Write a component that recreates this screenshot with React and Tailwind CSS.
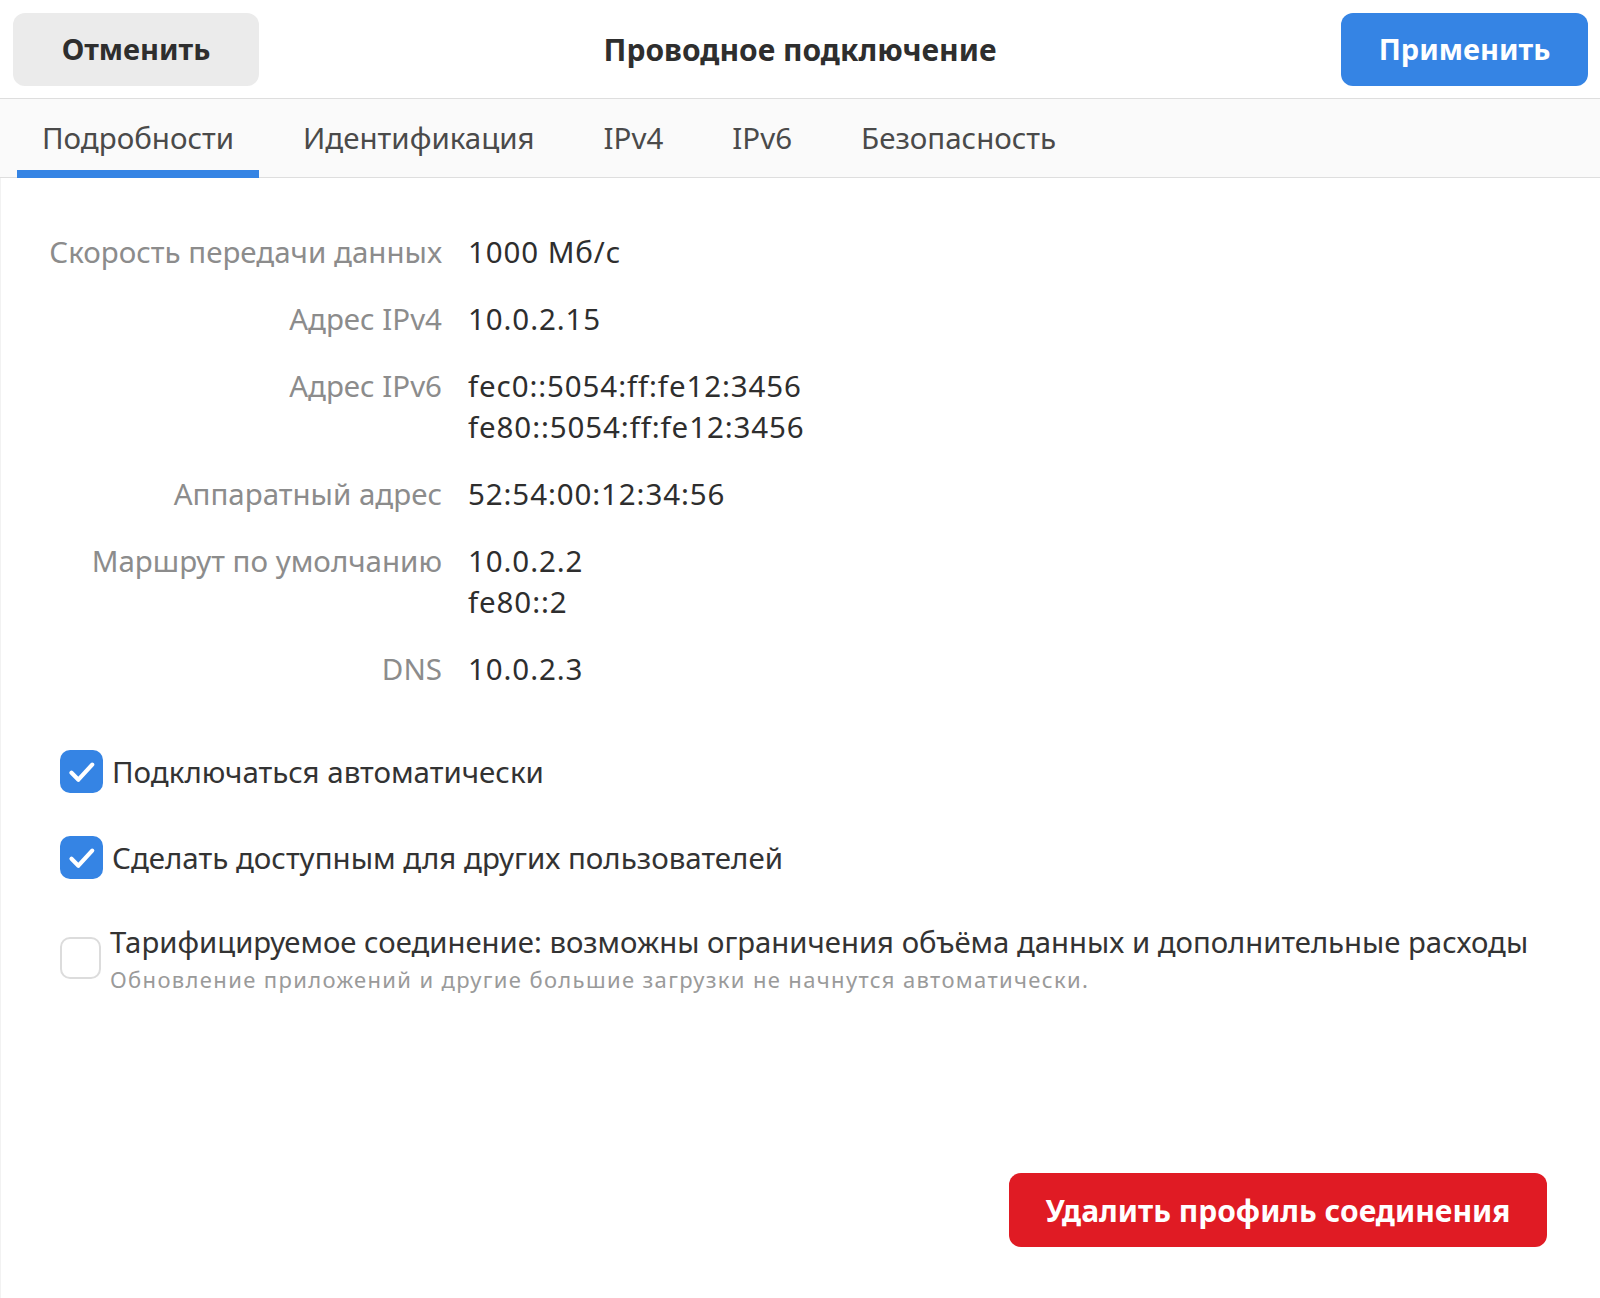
import React from 'react';

const rows = [
  { label: 'Скорость передачи данных', values: ['1000 Мб/с'] },
  { label: 'Адрес IPv4', values: ['10.0.2.15'] },
  { label: 'Адрес IPv6', values: ['fec0::5054:ff:fe12:3456', 'fe80::5054:ff:fe12:3456'] },
  { label: 'Аппаратный адрес', values: ['52:54:00:12:34:56'] },
  { label: 'Маршрут по умолчанию', values: ['10.0.2.2', 'fe80::2'] },
  { label: 'DNS', values: ['10.0.2.3'] },
];

const tabs = ['Подробности', 'Идентификация', 'IPv4', 'IPv6', 'Безопасность'];

const CheckBox = ({ checked }) =>
  checked ? (
    <div className="w-[43px] h-[43px] rounded-[10px] bg-[#3584e4] flex items-center justify-center shrink-0">
      <svg viewBox="0 0 24 24" className="w-[36px] h-[36px]" fill="none" stroke="white" strokeWidth="2.8" strokeLinecap="round" strokeLinejoin="round">
        <path d="M5 12.5l4.6 4.6 9.2-10" />
      </svg>
    </div>
  ) : (
    <div className="w-[41px] h-[42px] rounded-[10px] border-2 border-[#dcdcdc] bg-white shrink-0" />
  );

export default function App() {
  return (
    <div className="w-full h-[1298px] bg-white flex flex-col font-['Noto_Sans',sans-serif] text-[#2e2e2e]">
      {/* header bar */}
      <div className="h-[99px] flex items-center justify-between pl-[13px] pr-[12px] border-b border-[#dedede] bg-white shrink-0">
        <button className="w-[246px] h-[73px] rounded-[12px] bg-[#ebebeb] text-[29px] font-bold text-[#2e2e2e]">
          Отменить
        </button>
        <div className="text-[30px] font-bold text-[#2e2e2e]">Проводное подключение</div>
        <button className="w-[247px] h-[73px] rounded-[12px] bg-[#3584e4] text-[29px] font-bold text-white">
          Применить
        </button>
      </div>

      {/* tabs */}
      <div className="h-[79px] bg-[#fafafa] border-b border-[#dedede] flex items-stretch pl-[17px] gap-[19px] shrink-0">
        {tabs.map((t, i) => (
          <div key={t} className="relative px-[25px] flex items-center text-[29.5px] text-[#4a4a4a]">
            {t}
            {i === 0 && <div className="absolute left-0 right-0 bottom-[-1px] h-[8px] bg-[#3584e4]" />}
          </div>
        ))}
      </div>

      {/* details */}
      <div className="flex-1 flex flex-col border-l border-[#f2f2f2]">
        <div className="grid grid-cols-[441px_1fr] gap-x-[26px] gap-y-[26px] pt-[53px] text-[29.5px] leading-[41px]">
          {rows.map((r) => (
            <React.Fragment key={r.label}>
              <div className="text-right text-[#8c8c8c] whitespace-nowrap">{r.label}</div>
              <div className="flex flex-col text-[#2e2e2e] tracking-[0.9px]">
                {r.values.map((v) => (
                  <span key={v}>{v}</span>
                ))}
              </div>
            </React.Fragment>
          ))}
        </div>

        <div className="flex flex-col gap-[43px] pl-[59px] mt-[61px]">
          <div className="flex items-center gap-[9px] text-[29.5px] leading-[41px] text-[#333]">
            <CheckBox checked />
            <span>Подключаться автоматически</span>
          </div>
          <div className="flex items-center gap-[9px] text-[29.5px] leading-[41px] text-[#333]">
            <CheckBox checked />
            <span>Сделать доступным для других пользователей</span>
          </div>
          <div className="flex items-start gap-[9px]">
            <div className="mt-[15px]">
              <CheckBox checked={false} />
            </div>
            <div className="flex flex-col">
              <span className="text-[29.3px] leading-[41px] text-[#333]">
                Тарифицируемое соединение: возможны ограничения объёма данных и дополнительные расходы
              </span>
              <span className="text-[22px] leading-[33px] tracking-[1.35px] text-[#9a9a9a]">
                Обновление приложений и другие большие загрузки не начнутся автоматически.
              </span>
            </div>
          </div>
        </div>

        <div className="flex-1" />
        <div className="flex justify-end pr-[53px] pb-[51px]">
          <button className="w-[538px] h-[74px] rounded-[12px] bg-[#e01b24] text-[30px] font-bold text-white">
            Удалить профиль соединения
          </button>
        </div>
      </div>
    </div>
  );
}
